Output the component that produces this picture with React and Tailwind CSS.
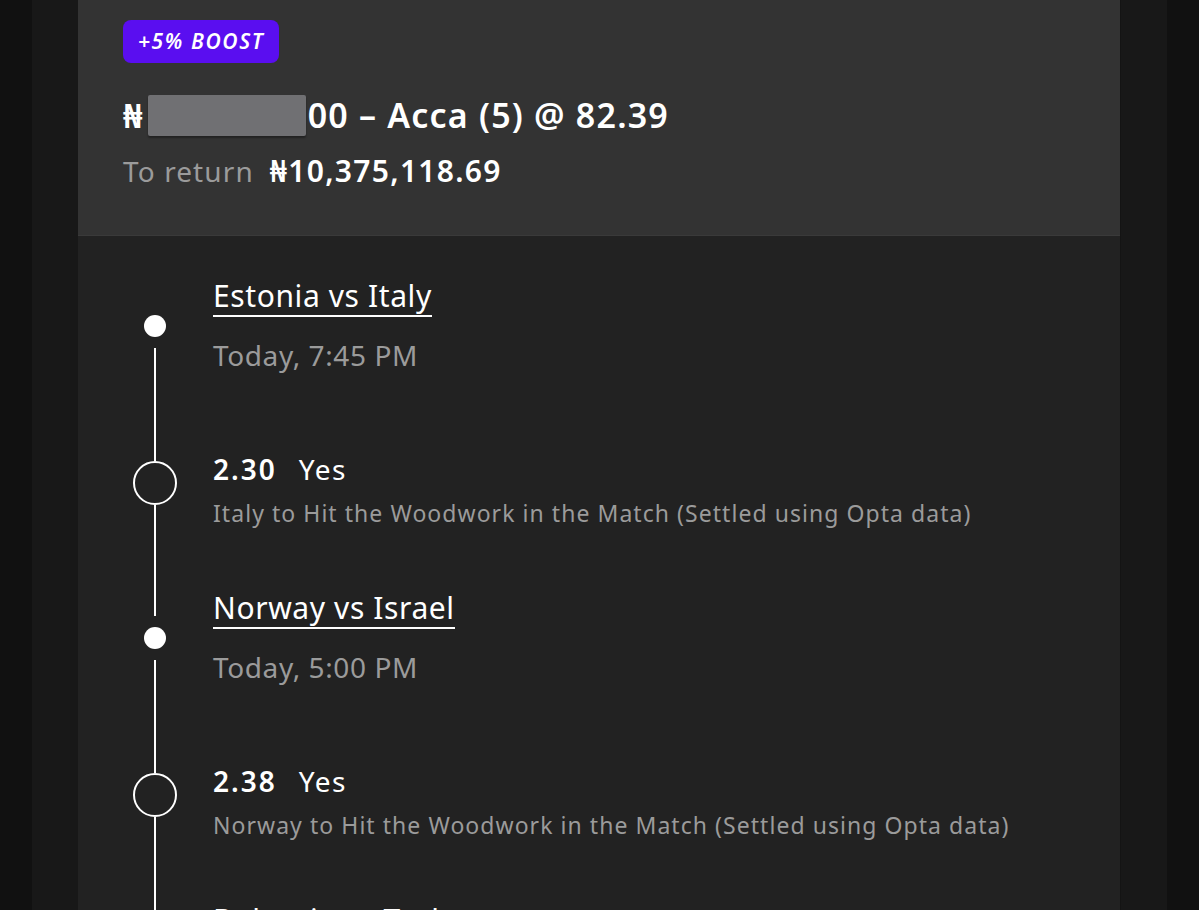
import React from "react";

const events = [
  {
    match: "Estonia vs Italy",
    time: "Today, 7:45 PM",
    odds: "2.30",
    pick: "Yes",
    market: "Italy to Hit the Woodwork in the Match (Settled using Opta data)",
  },
  {
    match: "Norway vs Israel",
    time: "Today, 5:00 PM",
    odds: "2.38",
    pick: "Yes",
    market: "Norway to Hit the Woodwork in the Match (Settled using Opta data)",
  },
  {
    match: "Bulgaria vs Turkey",
    time: "Today, 7:45 PM",
    odds: "2.10",
    pick: "Yes",
    market: "Turkey to Hit the Woodwork in the Match (Settled using Opta data)",
  },
];

const EventBlock = ({ ev, first }) => (
  <div className="flex h-[312px] shrink-0">
    {/* timeline column */}
    <div className="flex w-[44px] flex-col items-center">
      {first ? (
        <div className="h-[50px]" />
      ) : (
        <>
          <div className="h-[39px] w-[2px] bg-white" />
          <div className="h-[11px]" />
        </>
      )}
      <div className="h-[22px] w-[22px] rounded-full bg-white" />
      <div className="h-[11px]" />
      <div className="h-[113px] w-[2px] bg-white" />
      <div className="h-[44px] w-[44px] rounded-full border-2 border-white" />
      <div className="w-[2px] flex-1 bg-white" />
    </div>

    {/* content */}
    <div className="ml-[36px] flex flex-col pt-[11px]">
      <div>
        <span className="inline-block border-b-2 border-white text-[30px] leading-[39px] tracking-[0.6px] text-white">
          {ev.match}
        </span>
      </div>
      <div className="mt-[20px] text-[28px] leading-[36px] tracking-[0.6px] text-[#9b9b9b]">{ev.time}</div>
      <div className="mt-[78px] flex items-baseline text-[28px] leading-[36px] text-white">
        <span className="font-semibold tracking-[2px]">{ev.odds}</span>
        <span className="ml-[22px] tracking-[1.5px]">{ev.pick}</span>
      </div>
      <div className="mt-[11px] text-[23px] leading-[30px] tracking-[1.05px] text-[#9b9b9b]">{ev.market}</div>
    </div>
  </div>
);

export default function App() {
  return (
    <div
      className="flex h-[910px] w-full overflow-hidden bg-[#111111]"
      style={{ fontFamily: '"Noto Sans", Roboto, sans-serif' }}
    >
      <div className="w-[32px] shrink-0" />
      <div className="flex flex-1 bg-[#181818] px-[46px]">
        <div className="flex flex-1 flex-col border-r border-[#141414] bg-[#222222]">
          {/* header */}
          <div className="flex h-[236px] shrink-0 flex-col border-b border-[#3a3a3a] bg-[#333333] pl-[45px] pt-[20px]">
            <div className="flex">
              <span className="flex h-[43px] items-center rounded-[8px] bg-[#5a0ef0] px-[15px] text-[21px] font-semibold italic tracking-[1.6px] text-white">
                +5% BOOST
              </span>
            </div>
            <div className="mt-[30px] flex items-center text-[34px] font-semibold leading-[44px] tracking-[1.2px] text-white">
              <span className="font-bold">₦</span>
              <span className="ml-[4px] inline-block h-[41px] w-[158px] rounded-[2px] bg-[#707073] shadow-[0_2px_2px_rgba(0,0,0,0.35)]" />
              <span className="ml-[2px]">00 – Acca (5) @ 82.39</span>
            </div>
            <div className="mt-[16px] flex items-baseline leading-[36px]">
              <span className="text-[28px] tracking-[1.1px] text-[#9b9b9b]">To return</span>
              <span className="ml-[16px] text-[30px] font-semibold tracking-[1.3px] text-white">₦10,375,118.69</span>
            </div>
          </div>

          {/* legs */}
          <div className="flex flex-col pl-[55px] pt-[29px]">
            {events.map((ev, i) => (
              <EventBlock key={i} ev={ev} first={i === 0} />
            ))}
          </div>
        </div>
      </div>
      <div className="w-[32px] shrink-0" />
    </div>
  );
}
